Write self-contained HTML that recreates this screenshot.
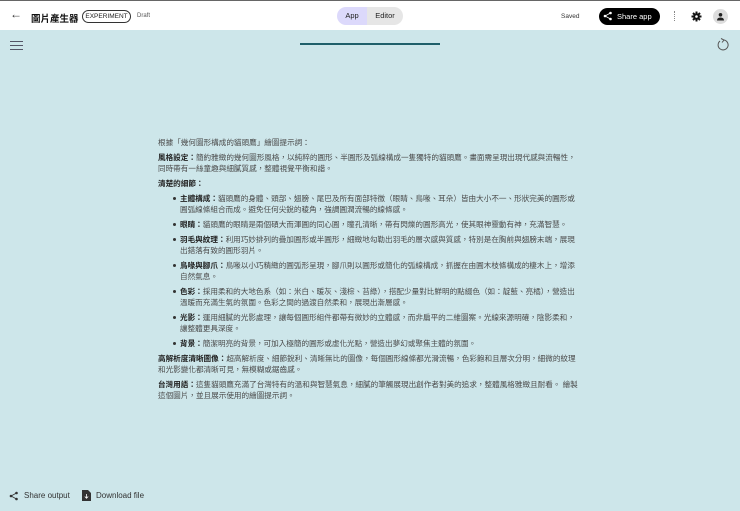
<!DOCTYPE html>
<html><head><meta charset="utf-8"><style>
*{margin:0;padding:0;box-sizing:border-box}
body{width:740px;height:511px;overflow:hidden;background:#cde6ea;font-family:"Liberation Sans","Noto Sans CJK TC",sans-serif;position:relative;color:#333}
.top{position:absolute;left:0;top:0;width:740px;height:30px;background:#fff;border-top:1px solid #666}
.abs{position:absolute}
.txt{position:absolute;left:158px;top:137px;width:422px;font-size:7.6px;line-height:11px;color:#4a4a4a}
.txt p{margin-bottom:4px}
.txt b{color:#222}
.txt ul{list-style:none;margin:0 0 4px 0}
.txt li{position:relative;padding-left:22px;margin-bottom:4px}
.txt li:before{content:"";position:absolute;left:15px;top:4px;width:3px;height:3px;border-radius:50%;background:#333}
</style></head><body>
<div class="top">
<div class="abs" style="left:10px;top:6px;font-size:12px;color:#333">←</div>
<div class="abs" style="left:31px;top:10px;font-size:9.5px;font-weight:bold;color:#111">圖片產生器</div>
<div class="abs" style="left:82px;top:9px;width:49px;height:13px;border:1px solid #333;border-radius:7px;font-size:6.5px;line-height:11px;text-align:center;color:#222">EXPERIMENT</div>
<div class="abs" style="left:137px;top:12px;font-size:6px;color:#555">Draft</div>
<div class="abs" style="left:337px;top:6px;width:30px;height:18px;background:#dcd9fb;border-radius:9px 0 0 9px;font-size:7.5px;line-height:18px;text-align:center;color:#222">App</div>
<div class="abs" style="left:367px;top:6px;width:36px;height:18px;background:#e6e6e6;border-radius:0 9px 9px 0;font-size:7.5px;line-height:18px;text-align:center;color:#222">Editor</div>
<div class="abs" style="left:561px;top:12px;font-size:6.5px;color:#333">Saved</div>
<div class="abs" style="left:599px;top:7px;width:61px;height:17px;background:#000;border-radius:9px;color:#fff;font-size:7.5px;line-height:17px;padding-left:18px">Share app</div>
<svg class="abs" style="left:603px;top:10px" width="10" height="10" viewBox="0 0 10 10"><circle cx="7.5" cy="2" r="1.3" fill="#fff"/><circle cx="2" cy="5" r="1.3" fill="#fff"/><circle cx="7.5" cy="8" r="1.3" fill="#fff"/><path d="M7.5 2L2 5L7.5 8" stroke="#fff" fill="none" stroke-width=".8"/></svg>
<div class="abs" style="left:674px;top:10px;width:2px;height:10px;border-left:1.5px dotted #888"></div>
<svg class="abs" style="left:691px;top:10px" width="11" height="11" viewBox="0 0 11 11"><circle cx="5.5" cy="5.5" r="3.3" fill="#111"/><path d="M5.5 0.5V10.5M0.5 5.5H10.5M2 2L9 9M9 2L2 9" stroke="#111" stroke-width="2"/><circle cx="5.5" cy="5.5" r="1.3" fill="#fff"/></svg>
<div class="abs" style="left:713px;top:8px;width:15px;height:15px;border-radius:50%;background:#ddd"></div>
<svg class="abs" style="left:716px;top:11px" width="9" height="9" viewBox="0 0 9 9"><circle cx="4.5" cy="2.8" r="1.8" fill="#222"/><path d="M1 8.5Q1 5.5 4.5 5.5Q8 5.5 8 8.5Z" fill="#222"/></svg>
</div>
<svg class="abs" style="left:10px;top:40px" width="13" height="11"><path d="M0 1.5H13M0 5.5H13M0 9.5H13" stroke="#556" stroke-width="1"/></svg>
<div class="abs" style="left:300px;top:43px;width:140px;height:2px;background:#1f5f6a"></div>
<svg class="abs" style="left:716px;top:38px" width="14" height="14" viewBox="0 0 14 14"><path d="M4 3A5 5 0 1 0 8 2" stroke="#555" fill="none" stroke-width="1"/><path d="M5 0.5L8 2L6 4.5" stroke="#555" fill="none" stroke-width="1"/></svg>
<div class="txt">
<p>根據「幾何圖形構成的貓頭鷹」繪圖提示詞：</p>
<p><b>風格設定：</b>簡約雅緻的幾何圖形風格，以純粹的圓形、半圓形及弧線構成一隻獨特的貓頭鷹。畫面需呈現出現代感與流暢性，同時帶有一絲童趣與細膩質感，整體視覺平衡和諧。</p>
<p><b>清楚的細節：</b></p>
<ul>
<li><b>主體構成：</b>貓頭鷹的身體、頭部、翅膀、尾巴及所有面部特徵（眼睛、鳥喙、耳朵）皆由大小不一、形狀完美的圓形或圓弧線條組合而成。避免任何尖銳的稜角，強調圓潤流暢的線條感。</li>
<li><b>眼睛：</b>貓頭鷹的眼睛是兩個碩大而渾圓的同心圓，瞳孔清晰，帶有閃爍的圓形高光，使其眼神靈動有神，充滿智慧。</li>
<li><b>羽毛與紋理：</b>利用巧妙排列的疊加圓形或半圓形，細緻地勾勒出羽毛的層次感與質感，特別是在胸前與翅膀末端，展現出錯落有致的圓形羽片。</li>
<li><b>鳥喙與腳爪：</b>鳥喙以小巧精緻的圓弧形呈現，腳爪則以圓形或簡化的弧線構成，抓握在由圓木枝條構成的棲木上，增添自然氣息。</li>
<li><b>色彩：</b>採用柔和的大地色系（如：米白、暖灰、淺棕、苔綠），搭配少量對比鮮明的點綴色（如：靛藍、亮橘），營造出溫暖而充滿生氣的氛圍。色彩之間的過渡自然柔和，展現出漸層感。</li>
<li><b>光影：</b>運用細膩的光影處理，讓每個圓形組件都帶有微妙的立體感，而非扁平的二維圖案。光線來源明確，陰影柔和，讓整體更具深度。</li>
<li><b>背景：</b>簡潔明亮的背景，可加入極簡的圓形或虛化光點，營造出夢幻或聚焦主體的氛圍。</li>
</ul>
<p><b>高解析度清晰圖像：</b>超高解析度、細節銳利、清晰無比的圖像，每個圓形線條都光滑流暢，色彩飽和且層次分明，細微的紋理和光影變化都清晰可見，無模糊或鋸齒感。</p>
<p><b>台灣用語：</b>這隻貓頭鷹充滿了台灣特有的溫和與智慧氣息，細膩的筆觸展現出創作者對美的追求，整體風格雅緻且耐看。 繪製這個圖片，並且展示使用的繪圖提示詞。</p>
</div>
<svg class="abs" style="left:9px;top:491px" width="10" height="10" viewBox="0 0 10 10"><circle cx="7.5" cy="2" r="1.3" fill="#333"/><circle cx="2" cy="5" r="1.3" fill="#333"/><circle cx="7.5" cy="8" r="1.3" fill="#333"/><path d="M7.5 2L2 5L7.5 8" stroke="#333" fill="none" stroke-width=".8"/></svg>
<div class="abs" style="left:24px;top:491px;font-size:8px;color:#333">Share output</div>
<svg class="abs" style="left:82px;top:490px" width="9" height="11" viewBox="0 0 9 11"><path d="M0 0H6L9 3V11H0Z" fill="#333"/><path d="M4.5 4V8M2.8 6.5L4.5 8.3L6.2 6.5" stroke="#fff" fill="none" stroke-width=".8"/></svg>
<div class="abs" style="left:96px;top:491px;font-size:8px;color:#333">Download file</div>
</body></html>
